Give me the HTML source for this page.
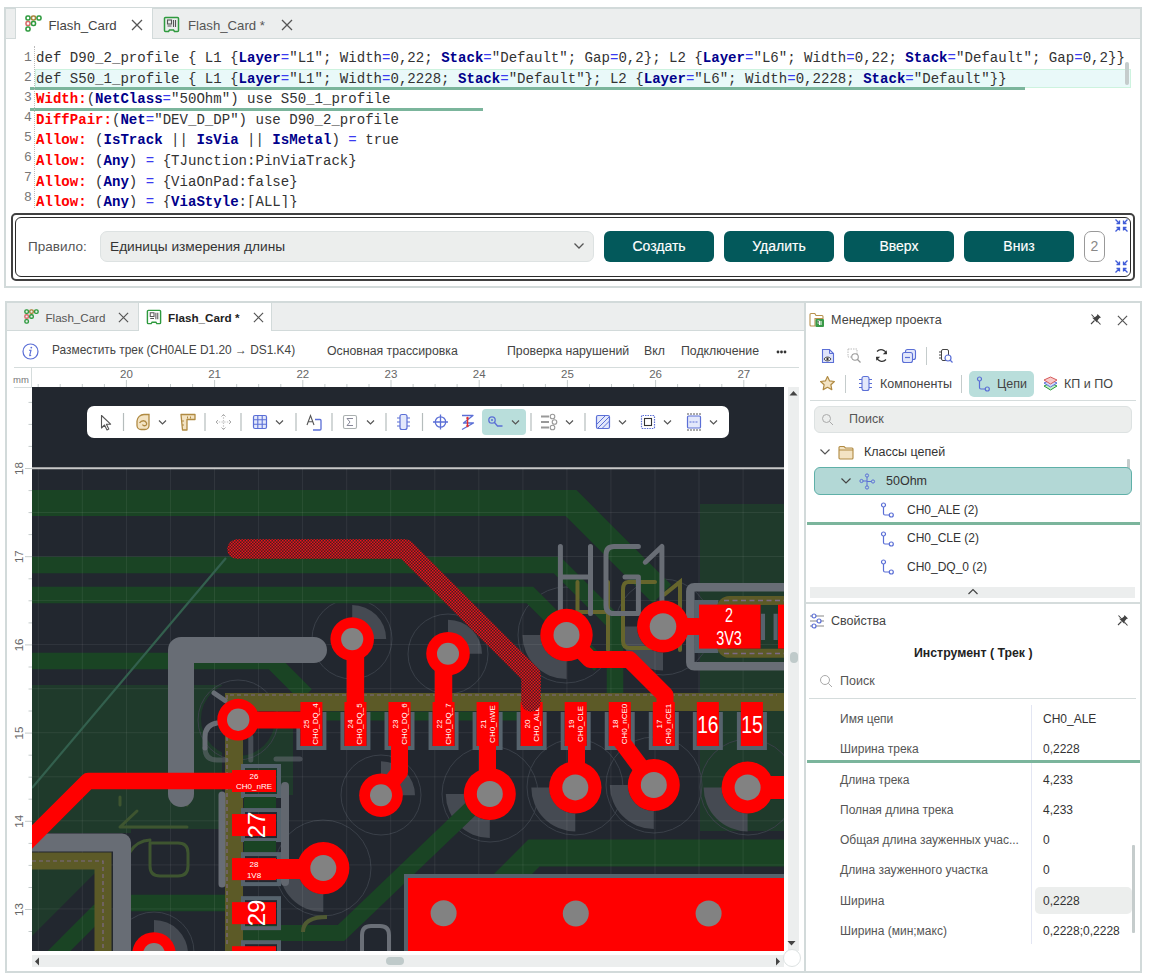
<!DOCTYPE html>
<html><head><meta charset="utf-8">
<style>
*{box-sizing:border-box;margin:0;padding:0}
html,body{width:1149px;height:977px;overflow:hidden;background:#fff;font-family:"Liberation Sans",sans-serif;color:#333}
.a{position:absolute}
.panel{position:absolute;border:2px solid #d2dada;background:#fff}
.tabbar{position:absolute;background:#eceeee;border-bottom:1px solid #d2dada}
.t{position:absolute;white-space:nowrap;line-height:1}
.code{position:absolute;left:36px;font-family:"Liberation Mono",monospace;font-size:14.07px;white-space:pre;color:#333;line-height:20px}
.ln{position:absolute;left:24px;font-family:"Liberation Mono",monospace;font-size:13px;color:#777;line-height:20px}
.k{color:#00008b;font-weight:bold}
.r{color:#f00;font-weight:bold}
.o{color:#3a3af0}
.btn{position:absolute;top:231px;width:110px;height:31px;background:#03595b;border-radius:6px;color:#fff;font-size:14px;-webkit-text-stroke:0.15px #fff;text-align:center;line-height:31px}
</style></head>
<body>
<!-- ============ TOP PANEL ============ -->
<div class="panel" style="left:4px;top:7px;width:1138px;height:281px"></div>
<div class="tabbar" style="left:6px;top:9px;width:1134px;height:30px"></div>
<div class="a" style="left:15px;top:8px;width:138px;height:31px;background:#fff;border-left:1px solid #d2dada;border-right:1px solid #d2dada"></div>
<svg class="a" style="left:25px;top:15px" width="17" height="17" viewBox="0 0 17 17"><g fill="none" stroke-width="1.6"><rect x="1" y="1" width="4" height="4" rx="1.5" stroke="#2e9a3e"/><rect x="6.5" y="1" width="4" height="4" rx="1.5" stroke="#a8823a"/><rect x="12" y="1" width="4" height="4" rx="1.5" stroke="#2e9a3e"/><rect x="1" y="6.5" width="4" height="4" rx="1.5" stroke="#d86a6a"/><rect x="6.5" y="6.5" width="4" height="4" rx="1.5" stroke="#2e9a3e"/><rect x="1" y="12" width="4" height="4" rx="1.5" stroke="#2e9a3e"/></g></svg>
<div class="t" style="left:48.5px;top:18.5px;font-size:13.2px;color:#444">Flash_Card</div>
<svg class="a" style="left:131px;top:19px" width="12" height="12" viewBox="0 0 12 12"><path d="M1 1L11 11M11 1L1 11" stroke="#555" stroke-width="1.3"/></svg>
<svg class="a" style="left:163px;top:16px" width="17" height="17" viewBox="0 0 17 17"><path d="M2.5 1.5h12a1 1 0 0 1 1 1v12a1 1 0 0 1-1 1h-3l-1-1.5h-4l-1 1.5h-3a1 1 0 0 1-1-1v-12a1 1 0 0 1 1-1z" fill="none" stroke="#2e9a3e" stroke-width="1.5"/><rect x="4.5" y="4" width="4" height="4" fill="none" stroke="#555" stroke-width="1.1"/><path d="M10.5 4v7M12.5 4v7M4.5 10h4" stroke="#555" stroke-width="1.1"/></svg>
<div class="t" style="left:188px;top:18.5px;font-size:13.2px;color:#555">Flash_Card *</div>
<svg class="a" style="left:281px;top:19px" width="12" height="12" viewBox="0 0 12 12"><path d="M1 1L11 11M11 1L1 11" stroke="#555" stroke-width="1.3"/></svg>


<!-- code -->
<div class="a" style="left:35px;top:69px;width:1096px;height:19px;background:#e9f9f9;border:1px solid #cdf3df"></div>
<div class="a" style="left:30px;top:87px;width:995px;height:3px;background:#7bb59c"></div>
<div class="a" style="left:30px;top:108px;width:453px;height:3px;background:#7bb59c"></div>
<div class="a" style="left:34px;top:46px;width:0;height:162px;border-left:1px dotted #bbb"></div>
<div class="a" style="left:1125px;top:62px;width:4px;height:23px;background:#c5cccc;border-radius:2px"></div>
<div class="a" style="left:0;top:44px;width:1140px;height:164px;overflow:hidden">
<div class="ln" style="top:4px">1<br>2<br>3<br>4<br>5<br>6<br>7<br>8</div>
</div>
<div class="a" style="left:0;top:44px;width:1140px;height:164px;overflow:hidden">
<div class="code" style="top:4px;line-height:20.6px">def D90_2_profile { L1 {<span class="k">Layer</span><span class="o">=</span>"L1"; Width<span class="o">=</span>0,22; <span class="k">Stack</span><span class="o">=</span>"Default"; Gap<span class="o">=</span>0,2}; L2 {<span class="k">Layer</span><span class="o">=</span>"L6"; Width<span class="o">=</span>0,22; <span class="k">Stack</span><span class="o">=</span>"Default"; Gap<span class="o">=</span>0,2}}
def S50_1_profile { L1 {<span class="k">Layer</span><span class="o">=</span>"L1"; Width<span class="o">=</span>0,2228; <span class="k">Stack</span><span class="o">=</span>"Default"}; L2 {<span class="k">Layer</span><span class="o">=</span>"L6"; Width<span class="o">=</span>0,2228; <span class="k">Stack</span><span class="o">=</span>"Default"}}
<span class="r">Width:</span>(<span class="k">NetClass</span><span class="o">=</span>"50Ohm") use S50_1_profile
<span class="r">DiffPair:</span>(<span class="k">Net</span><span class="o">=</span>"DEV_D_DP") use D90_2_profile
<span class="r">Allow:</span> (<span class="k">IsTrack</span> || <span class="k">IsVia</span> || <span class="k">IsMetal</span>) <span class="o">=</span> true
<span class="r">Allow:</span> (<span class="k">Any</span>) <span class="o">=</span> {TJunction:PinViaTrack}
<span class="r">Allow:</span> (<span class="k">Any</span>) <span class="o">=</span> {ViaOnPad:false}
<span class="r">Allow:</span> (<span class="k">Any</span>) <span class="o">=</span> {<span class="k">ViaStyle</span>:[ALL]}</div>
</div>

<!-- rule box -->
<div class="a" style="left:11px;top:213px;width:1124px;height:68px;border:2px solid #404040;border-radius:5px"></div>
<div class="a" style="left:15px;top:216.5px;width:1116px;height:60px;border:1.5px solid #2a2a2a;border-radius:6px"></div>
<div class="t" style="left:28px;top:240px;font-size:13.5px;color:#555">Правило:</div>
<div class="a" style="left:100px;top:231px;width:494px;height:31px;background:#eceeed;border:1px solid #dde2e2;border-radius:7px"></div>
<div class="t" style="left:110px;top:240px;font-size:13.7px;color:#333">Единицы измерения длины</div>
<svg class="a" style="left:573px;top:242px" width="12" height="8"><path d="M1.5 1.5l4.5 4.5 4.5-4.5" fill="none" stroke="#555" stroke-width="1.3"/></svg>
<div class="btn" style="left:604px">Создать</div>
<div class="btn" style="left:724px">Удалить</div>
<div class="btn" style="left:844px">Вверх</div>
<div class="btn" style="left:964px">Вниз</div>
<div class="a" style="left:1084px;top:231px;width:21px;height:31px;border:1px solid #999;border-radius:7px;color:#888;font-size:14px;text-align:center;line-height:29px">2</div>

<svg class="a" style="left:1114px;top:218px" width="15" height="15" viewBox="0 0 15 15"><g stroke="#3f5bd8" stroke-width="1.3" fill="none"><path d="M1.5 1.5l4 4M2.5 5.5h3v-3"/><path d="M13.5 1.5l-4 4M12.5 5.5h-3v-3"/><path d="M1.5 13.5l4-4M2.5 9.5h3v3"/><path d="M13.5 13.5l-4-4M12.5 9.5h-3v3"/></g></svg><svg class="a" style="left:1114px;top:259px" width="15" height="15" viewBox="0 0 15 15"><g stroke="#3f5bd8" stroke-width="1.3" fill="none"><path d="M1.5 1.5l4 4M2.5 5.5h3v-3"/><path d="M13.5 1.5l-4 4M12.5 5.5h-3v-3"/><path d="M1.5 13.5l4-4M2.5 9.5h3v3"/><path d="M13.5 13.5l-4-4M12.5 9.5h-3v3"/></g></svg>
<!-- ============ BOTTOM LEFT PANEL ============ -->
<div class="panel" style="left:5px;top:301px;width:801px;height:672px"></div>
<div class="tabbar" style="left:7px;top:303px;width:797px;height:28px"></div>
<div class="a" style="left:138px;top:303px;width:134px;height:28px;background:#fff;border-left:1px solid #d2dada;border-right:1px solid #d2dada"></div>
<!--PCB--><svg class="a" style="left:32px;top:387px" width="752" height="564" viewBox="32 387 752 564">
<defs><pattern id="hatch" width="3" height="3" patternUnits="userSpaceOnUse"><rect width="3" height="3" fill="#4a1c20"/><rect width="1.5" height="1.5" fill="#e8141a"/><rect x="1.5" y="1.5" width="1.5" height="1.5" fill="#e8141a"/></pattern></defs>
<rect x="32" y="387" width="752" height="564" fill="#22272f"/>
<path d="M32 685H222V829H131V833H32z" fill="#1f3a2b"/>
<rect x="700" y="504" width="84" height="327" fill="#1f3a2b"/>
<path d="M32 869H95V873L32 936z" fill="#1f3a2b"/>
<path d="M50 960L100 910" stroke="#1a4424" stroke-width="16"/>
<rect x="243" y="700" width="50" height="95" fill="#1f3a2b"/>
<circle cx="238" cy="719" r="37" fill="#22272f"/>
<circle cx="352" cy="639" r="40" fill="none" stroke="#3a4049" stroke-width="1"/>
<circle cx="448" cy="654" r="40" fill="none" stroke="#3a4049" stroke-width="1"/>
<circle cx="566" cy="635" r="48" fill="none" stroke="#3a4049" stroke-width="1"/>
<circle cx="663" cy="627" r="48" fill="none" stroke="#3a4049" stroke-width="1"/>
<circle cx="238" cy="720" r="40" fill="none" stroke="#3a4049" stroke-width="1"/>
<circle cx="381" cy="795" r="40" fill="none" stroke="#3a4049" stroke-width="1"/>
<circle cx="490" cy="794" r="48" fill="none" stroke="#3a4049" stroke-width="1"/>
<circle cx="575" cy="787" r="48" fill="none" stroke="#3a4049" stroke-width="1"/>
<circle cx="654" cy="785" r="48" fill="none" stroke="#3a4049" stroke-width="1"/>
<circle cx="748" cy="787" r="48" fill="none" stroke="#3a4049" stroke-width="1"/>
<circle cx="323" cy="868" r="48" fill="none" stroke="#3a4049" stroke-width="1"/>
<circle cx="154" cy="952" r="40" fill="none" stroke="#3a4049" stroke-width="1"/>
<path d="M522.5 635A44 44 0 0 0 566.5 679V661A26 26 0 0 1 540.5 635z" fill="#454a52"/>
<path d="M619 626.5A44 44 0 0 0 663 670.5V652.5A26 26 0 0 1 637 626.5z" fill="#454a52"/>
<path d="M445.8 794A44 44 0 0 0 489.8 838V820A26 26 0 0 1 463.8 794z" fill="#454a52"/>
<path d="M531.3 787.4A44 44 0 0 0 575.3 831.4V813.4A26 26 0 0 1 549.3 787.4z" fill="#454a52"/>
<path d="M609.8 785A44 44 0 0 0 653.8 829V811A26 26 0 0 1 627.8 785z" fill="#454a52"/>
<path d="M703.6 787.4A44 44 0 0 0 747.6 831.4V813.4A26 26 0 0 1 721.6 787.4z" fill="#454a52"/>
<path d="M279.3 868.1A44 44 0 0 0 323.3 912.1V894.1A26 26 0 0 1 297.3 868.1z" fill="#454a52"/>
<path d="M352.2 605.1A34 34 0 0 1 386.2 639.1H373.2A21 21 0 0 0 352.2 618.1z" fill="#454a52"/>
<path d="M448 619.7A34 34 0 0 1 482 653.7H469A21 21 0 0 0 448 632.7z" fill="#454a52"/>
<path d="M381 761.2A34 34 0 0 1 415 795.2H402A21 21 0 0 0 381 774.2z" fill="#454a52"/>
<path d="M154 920A34 34 0 0 1 188 954H175A21 21 0 0 0 154 933z" fill="#454a52"/>
<path d="M32 503H571L662 594" stroke="#1a4424" stroke-width="26" fill="none"/>
<path d="M32 565H557L615 623V700" stroke="#1a4424" stroke-width="16.5" fill="none"/>
<path d="M32 595H530L600 665" stroke="#1a4424" stroke-width="16.5" fill="none"/>
<path d="M32 661H272L306 695" stroke="#1a4424" stroke-width="16.5" fill="none"/>
<path d="M300 716H520" stroke="#1a4424" stroke-width="9" fill="none"/>
<path d="M131 903H225" stroke="#1a4424" stroke-width="16.5" fill="none"/>
<path d="M243 933H341L480 800" stroke="#1a4424" stroke-width="16" fill="none"/>
<path d="M784 853H534L470 917" stroke="#1a4424" stroke-width="27" fill="none"/>
<path d="M38.3 468V951 M82.3 468V951 M126.4 468V951 M170.4 468V951 M214.5 468V951 M258.6 468V951 M302.6 468V951 M346.7 468V951 M390.7 468V951 M434.8 468V951 M478.8 468V951 M522.9 468V951 M566.9 468V951 M610.9 468V951 M655.0 468V951 M699.0 468V951 M743.1 468V951 M32 512.5H784 M32 556.5H784 M32 600.6H784 M32 644.6H784 M32 688.7H784 M32 732.7H784 M32 776.8H784 M32 820.8H784 M32 864.9H784 M32 908.9H784" stroke="#ffffff" stroke-opacity="0.07" stroke-width="1" fill="none"/>
<path d="M234 951V702H784" stroke="#5c5a27" stroke-width="18" fill="none"/>
<path d="M234 951V702H784" stroke="#7d6a86" stroke-width="1.2" stroke-dasharray="4 3" fill="none" transform="translate(-7 -7)"/>
<path d="M32 861H103V951" stroke="#5c5a27" stroke-width="17" fill="none"/>
<path d="M32 861H103V951" stroke="#7d6a86" stroke-width="1.2" stroke-dasharray="4 3" fill="none"/>
<rect x="694.3" y="600" width="24" height="53" fill="#56636d"/>
<rect x="721.3" y="600.4" width="80" height="52.9" rx="8" stroke="#5c5a27" stroke-width="9" fill="none"/>
<path d="M724 600.5H784M724 653.5H784" stroke="#7d6a86" stroke-width="1.3" stroke-dasharray="5 3.5" fill="none"/>
<path d="M763 613.8V640M775.6 613.8V640" stroke="#56636d" stroke-width="4.1"/>
<path d="M577.5 582V612H608M608 582V650M655 582H628Q623 582 623 590V641Q623 648 630 648H655V620M664.5 594.4L680 582V650" stroke="#66652c" stroke-width="4" fill="none" stroke-linecap="round"/>
<path d="M120 797V805M187 797V805M120 827H187M120 827L137 811M150 840A25 25 0 0 0 130 852M150 843H178Q188 843 188 853V866Q188 876 178 876H160Q150 876 150 866V843" stroke="#3e5530" stroke-width="3" fill="none" stroke-linecap="round"/>
<path d="M181 794V650H314" stroke="#686d75" stroke-width="26" fill="none" stroke-linecap="round" stroke-linejoin="round"/>
<path d="M32 842.5H122V951" stroke="#686d75" stroke-width="18" fill="none" stroke-linejoin="round"/>
<path d="M222 795V884" stroke="#686d75" stroke-width="7" fill="none" stroke-linecap="round"/>
<path d="M285 786V882" stroke="#62676f" stroke-width="8" fill="none" stroke-linecap="round"/>
<path d="M784 587.3H694.3Q690.3 587.3 690.3 591.3V662.3Q690.3 666.3 694.3 666.3H784" stroke="#686d75" stroke-width="8.5" fill="none"/>
<path d="M560.4 546.5V613.6M590.5 546.5V613.6M560.4 577H590.5M638.4 546.5H614Q606 546.5 606 555V605Q606 613.6 614 613.6H638.4V577H625M645.3 562.2L661.9 546.5V613.6" stroke="#686d75" stroke-width="5" fill="none" stroke-linecap="round" stroke-linejoin="round"/>
<path d="M362 951V935Q362 926 371 926H380Q389 926 389 935V951" stroke="#6a6f77" stroke-width="4" fill="none"/>
<path d="M327 917Q303 917 303 932" stroke="#4f5a32" stroke-width="4" fill="none"/>
<path d="M214 693L225 700.5M217 723Q205 725 205 737V748" stroke="#686d75" stroke-width="5" fill="none" stroke-linecap="round"/>
<path d="M205 748Q205 760 217 760H226M250.8 737V760M276 759H300" stroke="#686d75" stroke-width="5" fill="none" stroke-linecap="round" opacity="0.55"/>
<path d="M298.4 712V748H324.4V712" stroke="#56636d" stroke-width="4" fill="none"/>
<path d="M342.45 712V748H368.45V712" stroke="#56636d" stroke-width="4" fill="none"/>
<path d="M386.5 712V748H412.5V712" stroke="#56636d" stroke-width="4" fill="none"/>
<path d="M430.54999999999995 712V748H456.54999999999995V712" stroke="#56636d" stroke-width="4" fill="none"/>
<path d="M474.59999999999997 712V748H500.59999999999997V712" stroke="#56636d" stroke-width="4" fill="none"/>
<path d="M518.65 712V748H544.65V712" stroke="#56636d" stroke-width="4" fill="none"/>
<path d="M562.6999999999999 712V748H588.6999999999999V712" stroke="#56636d" stroke-width="4" fill="none"/>
<path d="M606.75 712V748H632.75V712" stroke="#56636d" stroke-width="4" fill="none"/>
<path d="M650.8 712V748H676.8V712" stroke="#56636d" stroke-width="4" fill="none"/>
<path d="M694.8499999999999 712V748H720.8499999999999V712" stroke="#56636d" stroke-width="4" fill="none"/>
<path d="M738.9 712V748H764.9V712" stroke="#56636d" stroke-width="4" fill="none"/>
<rect x="243" y="766.0" width="36" height="30" fill="none" stroke="#56636d" stroke-width="4"/>
<rect x="243" y="810.05" width="36" height="30" fill="none" stroke="#56636d" stroke-width="4"/>
<rect x="243" y="854.1" width="36" height="30" fill="none" stroke="#56636d" stroke-width="4"/>
<rect x="243" y="898.15" width="36" height="30" fill="none" stroke="#56636d" stroke-width="4"/>
<rect x="243" y="942.2" width="36" height="30" fill="none" stroke="#56636d" stroke-width="4"/>
<rect x="244" y="797.0" width="32" height="11" fill="#1a4424"/>
<rect x="244" y="841.0" width="32" height="11" fill="#1a4424"/>
<rect x="406" y="876" width="400" height="100" fill="none" stroke="#56636d" stroke-width="4"/>
<path d="M238 720H311" stroke="#ff0000" stroke-width="17" fill="none" stroke-linejoin="round"/>
<path d="M355.4 645V723" stroke="#ff0000" stroke-width="17.5" fill="none" stroke-linejoin="round"/>
<path d="M443.5 660V723" stroke="#ff0000" stroke-width="17.5" fill="none" stroke-linejoin="round"/>
<path d="M399.5 723V772L381 795" stroke="#ff0000" stroke-width="17" fill="none" stroke-linejoin="round"/>
<path d="M487.5 723V794" stroke="#ff0000" stroke-width="17" fill="none" stroke-linejoin="round"/>
<path d="M566.5 635L590 659.4H629.4L665 695V723" stroke="#ff0000" stroke-width="17" fill="none" stroke-linejoin="round"/>
<path d="M663 626.5H700" stroke="#ff0000" stroke-width="17" fill="none" stroke-linejoin="round"/>
<path d="M576.5 723V787" stroke="#ff0000" stroke-width="17" fill="none" stroke-linejoin="round"/>
<path d="M620.4 740L654 785" stroke="#ff0000" stroke-width="17" fill="none" stroke-linejoin="round"/>
<path d="M748 787.5H784" stroke="#ff0000" stroke-width="23" fill="none" stroke-linejoin="round"/>
<path d="M26 843L88 781H260" stroke="#ff0000" stroke-width="16.5" fill="none" stroke-linejoin="round"/>
<path d="M254 869H323" stroke="#ff0000" stroke-width="20" fill="none" stroke-linejoin="round"/>
<path d="M154 960H260" stroke="#ff0000" stroke-width="12" fill="none" stroke-linejoin="round"/>
<rect x="300.4" y="702" width="22" height="44" fill="#ff0000"/>
<rect x="344.45" y="702" width="22" height="44" fill="#ff0000"/>
<rect x="388.5" y="702" width="22" height="44" fill="#ff0000"/>
<rect x="432.54999999999995" y="702" width="22" height="44" fill="#ff0000"/>
<rect x="476.59999999999997" y="702" width="22" height="44" fill="#ff0000"/>
<rect x="520.65" y="702" width="22" height="44" fill="#ff0000"/>
<rect x="564.6999999999999" y="702" width="22" height="44" fill="#ff0000"/>
<rect x="608.75" y="702" width="22" height="44" fill="#ff0000"/>
<rect x="652.8" y="702" width="22" height="44" fill="#ff0000"/>
<rect x="696.8499999999999" y="702" width="22" height="44" fill="#ff0000"/>
<rect x="740.9" y="702" width="22" height="44" fill="#ff0000"/>
<rect x="232" y="770.0" width="44" height="22" fill="#ff0000"/>
<rect x="232" y="814.05" width="44" height="22" fill="#ff0000"/>
<rect x="232" y="858.1" width="44" height="22" fill="#ff0000"/>
<rect x="232" y="902.15" width="44" height="22" fill="#ff0000"/>
<rect x="232" y="946.2" width="44" height="22" fill="#ff0000"/>
<rect x="232" y="990.25" width="44" height="22" fill="#ff0000"/>
<rect x="699" y="604.6" width="61.5" height="44" fill="#ff0000"/>
<rect x="778" y="604.6" width="10" height="44" fill="#ff0000"/>
<rect x="408" y="878" width="380" height="80" fill="#ff0000"/>
<circle cx="238.2" cy="719.7" r="20.9" fill="#ff0000"/>
<circle cx="352.2" cy="639.1" r="21.8" fill="#ff0000"/>
<circle cx="448" cy="653.7" r="21.8" fill="#ff0000"/>
<circle cx="381" cy="795.2" r="21.8" fill="#ff0000"/>
<circle cx="489.8" cy="794" r="26" fill="#ff0000"/>
<circle cx="566.5" cy="635" r="26.2" fill="#ff0000"/>
<circle cx="663" cy="626.5" r="26" fill="#ff0000"/>
<circle cx="575.3" cy="787.4" r="26.2" fill="#ff0000"/>
<circle cx="653.8" cy="785" r="26" fill="#ff0000"/>
<circle cx="747.6" cy="787.4" r="26" fill="#ff0000"/>
<circle cx="323.3" cy="868.1" r="26.1" fill="#ff0000"/>
<circle cx="154" cy="954" r="21.8" fill="#ff0000"/>
<circle cx="238.2" cy="719.7" r="11.2" fill="#828282"/>
<circle cx="352.2" cy="639.1" r="11.1" fill="#828282"/>
<circle cx="448" cy="653.7" r="11" fill="#828282"/>
<circle cx="381" cy="795.2" r="11" fill="#828282"/>
<circle cx="489.8" cy="794" r="13" fill="#828282"/>
<circle cx="566.5" cy="635" r="13" fill="#828282"/>
<circle cx="663" cy="626.5" r="13.3" fill="#828282"/>
<circle cx="575.3" cy="787.4" r="13" fill="#828282"/>
<circle cx="653.8" cy="785" r="13" fill="#828282"/>
<circle cx="747.6" cy="787.4" r="13" fill="#828282"/>
<circle cx="323.3" cy="868.1" r="13" fill="#828282"/>
<circle cx="154" cy="954" r="11" fill="#828282"/>
<circle cx="443.6" cy="913.2" r="13" fill="#828282"/>
<circle cx="575.8" cy="913.5" r="13" fill="#828282"/>
<circle cx="708.6" cy="913.5" r="13" fill="#828282"/>
<text transform="translate(311.4 724) rotate(-90)" text-anchor="middle" font-family="Liberation Sans Narrow,Liberation Sans" font-size="8" fill="#fff" ><tspan x="0" dy="-2">25</tspan><tspan x="0" dy="9">CH0_DQ_4</tspan></text>
<text transform="translate(355.45 724) rotate(-90)" text-anchor="middle" font-family="Liberation Sans Narrow,Liberation Sans" font-size="8" fill="#fff" ><tspan x="0" dy="-2">24</tspan><tspan x="0" dy="9">CH0_DQ_5</tspan></text>
<text transform="translate(399.5 724) rotate(-90)" text-anchor="middle" font-family="Liberation Sans Narrow,Liberation Sans" font-size="8" fill="#fff" ><tspan x="0" dy="-2">23</tspan><tspan x="0" dy="9">CH0_DQ_6</tspan></text>
<text transform="translate(443.54999999999995 724) rotate(-90)" text-anchor="middle" font-family="Liberation Sans Narrow,Liberation Sans" font-size="8" fill="#fff" ><tspan x="0" dy="-2">22</tspan><tspan x="0" dy="9">CH0_DQ_7</tspan></text>
<text transform="translate(487.59999999999997 724) rotate(-90)" text-anchor="middle" font-family="Liberation Sans Narrow,Liberation Sans" font-size="8" fill="#fff" ><tspan x="0" dy="-2">21</tspan><tspan x="0" dy="9">CH0_nWE</tspan></text>
<text transform="translate(531.65 724) rotate(-90)" text-anchor="middle" font-family="Liberation Sans Narrow,Liberation Sans" font-size="8" fill="#fff" ><tspan x="0" dy="-2">20</tspan><tspan x="0" dy="9">CH0_ALE</tspan></text>
<text transform="translate(575.6999999999999 724) rotate(-90)" text-anchor="middle" font-family="Liberation Sans Narrow,Liberation Sans" font-size="8" fill="#fff" ><tspan x="0" dy="-2">19</tspan><tspan x="0" dy="9">CH0_CLE</tspan></text>
<text transform="translate(619.75 724) rotate(-90)" text-anchor="middle" font-family="Liberation Sans Narrow,Liberation Sans" font-size="8" fill="#fff" ><tspan x="0" dy="-2">18</tspan><tspan x="0" dy="9">CH0_nCE0</tspan></text>
<text transform="translate(663.8 724) rotate(-90)" text-anchor="middle" font-family="Liberation Sans Narrow,Liberation Sans" font-size="8" fill="#fff" ><tspan x="0" dy="-2">17</tspan><tspan x="0" dy="9">CH0_nCE1</tspan></text>
<text x="707.8499999999999" y="733" text-anchor="middle" font-family="Liberation Sans" font-size="24" fill="#fff" transform="translate(707.8499999999999 0) scale(0.8 1) translate(-707.8499999999999 0)">16</text>
<text x="751.9" y="733" text-anchor="middle" font-family="Liberation Sans" font-size="24" fill="#fff" transform="translate(751.9 0) scale(0.8 1) translate(-751.9 0)">15</text>
<text x="254" y="779" text-anchor="middle" font-family="Liberation Sans" font-size="8" fill="#fff">26</text><text x="254" y="789" text-anchor="middle" font-family="Liberation Sans" font-size="8" fill="#fff" textLength="36">CH0_nRE</text>
<text x="254" y="867" text-anchor="middle" font-family="Liberation Sans" font-size="8" fill="#fff">28</text><text x="254" y="878" text-anchor="middle" font-family="Liberation Sans" font-size="8" fill="#fff">1V8</text>
<text transform="translate(265 825) rotate(-90)" text-anchor="middle" font-family="Liberation Sans" font-size="24" fill="#fff">27</text>
<text transform="translate(265 913) rotate(-90)" text-anchor="middle" font-family="Liberation Sans" font-size="24" fill="#fff">29</text>
<g transform="translate(729 0) scale(0.72 1)"><text x="0" y="622.5" text-anchor="middle" font-family="Liberation Sans" font-size="20" fill="#fff">2</text><text x="0" y="645" text-anchor="middle" font-family="Liberation Sans" font-size="20" fill="#fff">3V3</text></g>
<path d="M237 549H405L531 675V702" stroke="url(#hatch)" stroke-width="19.5" fill="none" stroke-linecap="round" stroke-linejoin="round"/>
<path d="M226 558L32 788" stroke="#33604e" stroke-width="2.2" fill="none"/>
<path d="M32 468.3H784" stroke="#c8c8c8" stroke-width="2"/>
</svg><!--/PCB--><!--TB--><div class="a" style="left:87px;top:406px;width:642px;height:32px;background:#fff;border-radius:7px"></div>
<svg class="a" style="left:0;top:0" width="1149" height="977" viewBox="0 0 1149 977">
<rect x="482" y="409" width="44" height="26" rx="4" fill="#b9dedb"/>
<path d="M123.5 413V431" stroke="#b5bcbc" stroke-width="1.2"/>
<path d="M205 413V431" stroke="#b5bcbc" stroke-width="1.2"/>
<path d="M241 413V431" stroke="#b5bcbc" stroke-width="1.2"/>
<path d="M296 413V431" stroke="#b5bcbc" stroke-width="1.2"/>
<path d="M332 413V431" stroke="#b5bcbc" stroke-width="1.2"/>
<path d="M386 413V431" stroke="#b5bcbc" stroke-width="1.2"/>
<path d="M422.5 413V431" stroke="#b5bcbc" stroke-width="1.2"/>
<path d="M531 413V431" stroke="#b5bcbc" stroke-width="1.2"/>
<path d="M585 413V431" stroke="#b5bcbc" stroke-width="1.2"/>
<path d="M159 420.5l3.5 3.5 3.5-3.5" stroke="#555" stroke-width="1.2" fill="none"/>
<path d="M276 420.5l3.5 3.5 3.5-3.5" stroke="#555" stroke-width="1.2" fill="none"/>
<path d="M367 420.5l3.5 3.5 3.5-3.5" stroke="#555" stroke-width="1.2" fill="none"/>
<path d="M512 420.5l3.5 3.5 3.5-3.5" stroke="#555" stroke-width="1.2" fill="none"/>
<path d="M566 420.5l3.5 3.5 3.5-3.5" stroke="#555" stroke-width="1.2" fill="none"/>
<path d="M619 420.5l3.5 3.5 3.5-3.5" stroke="#555" stroke-width="1.2" fill="none"/>
<path d="M664 420.5l3.5 3.5 3.5-3.5" stroke="#555" stroke-width="1.2" fill="none"/>
<path d="M710 420.5l3.5 3.5 3.5-3.5" stroke="#555" stroke-width="1.2" fill="none"/>
<path d="M101.5 415.5V428l3-3 2.5 5 1.8-.9-2.4-4.9h4.2z" fill="#fff" stroke="#555" stroke-width="1.1" stroke-linejoin="round"/>
<path d="M137 421a7 7 0 0 1 7-6.5h5v11a4 4 0 0 1-4 4h-4a4 4 0 0 1-4-4z" fill="#f3e3c3" stroke="#b08a42" stroke-width="1.3"/><path d="M139.5 423c2-3 6-3 7 0s-3 3.5-4 1.5" stroke="#b08a42" stroke-width="1.3" fill="none"/>
<path d="M181 414.5h14v5h-8v10.5h-4.5z" fill="#f3e3c3" stroke="#b08a42" stroke-width="1.3" stroke-linejoin="round"/><path d="M183 420v2M183 424v2M187.5 416.5v2M190.5 416.5v2" stroke="#b08a42" stroke-width="1"/>
<path d="M223.5 414.5v15M216 422h15" stroke="#c5c5c5" stroke-width="1.2" stroke-dasharray="1.5 1.2"/><path d="M221.5 416.5l2-2 2 2M221.5 427.5l2 2 2-2M218 420l-2 2 2 2M229 420l2 2-2 2" stroke="#aaa" stroke-width="1" fill="none"/>
<rect x="253.5" y="415.5" width="13" height="13" rx="1.5" fill="#e3e8fb" stroke="#5b6fd6" stroke-width="1.2"/><path d="M257.8 415.5v13M262.2 415.5v13M253.5 419.8h13M253.5 424.2h13" stroke="#5b6fd6" stroke-width="1.1"/>
<path d="M307 425l3.5-9.5 3.5 9.5M308.3 421.7h4.4" stroke="#555" stroke-width="1.1" fill="none"/><path d="M315 419.5h5a1 1 0 0 1 1 1V429a1 1 0 0 1-1 1h-7" stroke="#5b6fd6" stroke-width="1.3" fill="none"/>
<rect x="343.5" y="415.5" width="13" height="13" rx="1.5" fill="none" stroke="#aab0b0" stroke-width="1.1"/><path d="M353 418.5h-6l3 3.5-3 3.5h6" stroke="#889" stroke-width="1" fill="none"/>
<rect x="400" y="414.5" width="7" height="15" rx="2" fill="#e3e8fb" stroke="#5b6fd6" stroke-width="1.2"/><path d="M397 418h3M397 422h3M397 426h3M407 418h3M407 422h3M407 426h3" stroke="#5b6fd6" stroke-width="1.2"/>
<circle cx="440.5" cy="422" r="5.2" fill="none" stroke="#5b6fd6" stroke-width="1.3"/><path d="M440.5 414.5v15M433 422h15" stroke="#5b6fd6" stroke-width="1.3"/>
<path d="M462 415.5h11l-9.5 7.5h10l-11.5 6.5" stroke="#5b6fd6" stroke-width="1.3" fill="none" stroke-linejoin="round"/><path d="M467.5 418v8" stroke="#e03030" stroke-width="1.5"/><circle cx="467.5" cy="418" r="1.2" fill="#e03030"/><circle cx="467.5" cy="426" r="1.2" fill="#e03030"/>
<circle cx="492" cy="420" r="3.2" fill="none" stroke="#5b6fd6" stroke-width="1.3"/><circle cx="492" cy="420" r="1" fill="#5b6fd6"/><path d="M494.5 422.5l3 3.5h5" stroke="#5b6fd6" stroke-width="1.3" fill="none"/>
<path d="M541 416.5h8M541 422h8M541 427.5h8" stroke="#999" stroke-width="2"/><circle cx="552.5" cy="416.5" r="2.3" fill="#fff" stroke="#999" stroke-width="1.1"/><circle cx="554.5" cy="422" r="2.3" fill="#fff" stroke="#999" stroke-width="1.1"/><circle cx="552.5" cy="427.5" r="2.3" fill="#fff" stroke="#999" stroke-width="1.1"/>
<rect x="596.5" y="415.5" width="13" height="13" rx="1.5" fill="#e3e8fb" stroke="#5b6fd6" stroke-width="1.2"/><path d="M597 424l8-8M598 428l11-11M602 428.5l7.5-7.5" stroke="#5b6fd6" stroke-width="1"/>
<rect x="641.5" y="415.5" width="13" height="13" rx="1" fill="none" stroke="#5b6fd6" stroke-width="1.2" stroke-dasharray="1.5 1"/><rect x="644.5" y="418.5" width="7" height="7" fill="none" stroke="#333" stroke-width="1.1"/>
<rect x="687.5" y="416" width="13" height="12" rx="1" fill="#e3e8fb" stroke="#5b6fd6" stroke-width="1.2"/><path d="M687 414h14M687 430h14" stroke="#555" stroke-width="1" stroke-dasharray="2 1"/><path d="M689.5 422h9" stroke="#5b6fd6" stroke-width="1" stroke-dasharray="2 1"/>
</svg><!--/TB-->
<svg class="a" style="left:24px;top:309px" width="15" height="15" viewBox="0 0 17 17"><g fill="none" stroke-width="1.6"><rect x="1" y="1" width="4" height="4" rx="1.5" stroke="#2e9a3e"/><rect x="6.5" y="1" width="4" height="4" rx="1.5" stroke="#a8823a"/><rect x="12" y="1" width="4" height="4" rx="1.5" stroke="#2e9a3e"/><rect x="1" y="6.5" width="4" height="4" rx="1.5" stroke="#d86a6a"/><rect x="6.5" y="6.5" width="4" height="4" rx="1.5" stroke="#2e9a3e"/><rect x="1" y="12" width="4" height="4" rx="1.5" stroke="#2e9a3e"/></g></svg>
<div class="t" style="left:45.5px;top:311.5px;font-size:11.6px;color:#555">Flash_Card</div>
<svg class="a" style="left:118px;top:312px" width="11" height="11" viewBox="0 0 12 12"><path d="M1 1L11 11M11 1L1 11" stroke="#555" stroke-width="1.3"/></svg>
<svg class="a" style="left:146px;top:309px" width="16" height="16" viewBox="0 0 17 17"><path d="M2.5 1.5h12a1 1 0 0 1 1 1v12a1 1 0 0 1-1 1h-3l-1-1.5h-4l-1 1.5h-3a1 1 0 0 1-1-1v-12a1 1 0 0 1 1-1z" fill="none" stroke="#2e9a3e" stroke-width="1.5"/><rect x="4.5" y="4" width="4" height="4" fill="none" stroke="#555" stroke-width="1.1"/><path d="M10.5 4v7M12.5 4v7M4.5 10h4" stroke="#555" stroke-width="1.1"/></svg>
<div class="t" style="left:168px;top:311.5px;font-size:11.7px;color:#222;font-weight:bold">Flash_Card *</div>
<svg class="a" style="left:253px;top:312px" width="11" height="11" viewBox="0 0 12 12"><path d="M1 1L11 11M11 1L1 11" stroke="#555" stroke-width="1.3"/></svg>

<svg class="a" style="left:22px;top:343px" width="17" height="17" viewBox="0 0 17 17"><circle cx="8.5" cy="8.5" r="7.5" fill="none" stroke="#5b6fd6" stroke-width="1.2"/><circle cx="9.3" cy="4.6" r="0.9" fill="#5b6fd6"/><path d="M7 7.2h2l-1.3 5.2c-.1.5.4.6 1.4-.3" fill="none" stroke="#5b6fd6" stroke-width="1.1"/></svg>
<div class="t" style="left:52px;top:345px;font-size:11.9px;color:#444">Разместить трек (CH0ALE D1.20 → DS1.K4)</div>
<div class="t" style="left:327px;top:345px;font-size:12.3px;color:#444">Основная трассировка</div>
<div class="t" style="left:507px;top:345px;font-size:12.3px;color:#444">Проверка нарушений</div>
<div class="t" style="left:644px;top:345px;font-size:12.3px;color:#444">Вкл</div>
<div class="t" style="left:681px;top:345px;font-size:12.3px;color:#444">Подключение</div>
<svg class="a" style="left:776px;top:349px" width="12" height="6"><circle cx="2" cy="3" r="1.4" fill="#333"/><circle cx="5.5" cy="3" r="1.4" fill="#333"/><circle cx="9" cy="3" r="1.4" fill="#333"/></svg>
<div class="a" style="left:14px;top:367px;width:785px;height:1px;background:#d5dcdc"></div>
<div class="a" style="left:14px;top:387px;width:18px;height:1px;background:#d5dcdc"></div>
<div class="a" style="left:31px;top:367px;width:1px;height:20px;background:#d5dcdc"></div>
<div class="t" style="left:13px;top:374.5px;font-size:9.5px;color:#777">mm</div>
<svg class="a" style="left:0;top:0" width="1149" height="977" viewBox="0 0 1149 977" font-family="Liberation Sans"><path d="M38.2 384V387" stroke="#c5cccc" stroke-width="1"/><path d="M60.2 384V387" stroke="#c5cccc" stroke-width="1"/><path d="M82.3 384V387" stroke="#c5cccc" stroke-width="1"/><path d="M104.4 384V387" stroke="#c5cccc" stroke-width="1"/><path d="M126.4 380V387" stroke="#c5cccc" stroke-width="1"/><text x="126.4" y="377.5" text-anchor="middle" font-size="11.5" fill="#666">20</text><path d="M148.5 384V387" stroke="#c5cccc" stroke-width="1"/><path d="M170.5 384V387" stroke="#c5cccc" stroke-width="1"/><path d="M192.6 384V387" stroke="#c5cccc" stroke-width="1"/><path d="M214.6 380V387" stroke="#c5cccc" stroke-width="1"/><text x="214.6" y="377.5" text-anchor="middle" font-size="11.5" fill="#666">21</text><path d="M236.7 384V387" stroke="#c5cccc" stroke-width="1"/><path d="M258.7 384V387" stroke="#c5cccc" stroke-width="1"/><path d="M280.8 384V387" stroke="#c5cccc" stroke-width="1"/><path d="M302.8 380V387" stroke="#c5cccc" stroke-width="1"/><text x="302.8" y="377.5" text-anchor="middle" font-size="11.5" fill="#666">22</text><path d="M324.9 384V387" stroke="#c5cccc" stroke-width="1"/><path d="M346.9 384V387" stroke="#c5cccc" stroke-width="1"/><path d="M369.0 384V387" stroke="#c5cccc" stroke-width="1"/><path d="M391.0 380V387" stroke="#c5cccc" stroke-width="1"/><text x="391.0" y="377.5" text-anchor="middle" font-size="11.5" fill="#666">23</text><path d="M413.1 384V387" stroke="#c5cccc" stroke-width="1"/><path d="M435.1 384V387" stroke="#c5cccc" stroke-width="1"/><path d="M457.1 384V387" stroke="#c5cccc" stroke-width="1"/><path d="M479.2 380V387" stroke="#c5cccc" stroke-width="1"/><text x="479.2" y="377.5" text-anchor="middle" font-size="11.5" fill="#666">24</text><path d="M501.2 384V387" stroke="#c5cccc" stroke-width="1"/><path d="M523.3 384V387" stroke="#c5cccc" stroke-width="1"/><path d="M545.4 384V387" stroke="#c5cccc" stroke-width="1"/><path d="M567.4 380V387" stroke="#c5cccc" stroke-width="1"/><text x="567.4" y="377.5" text-anchor="middle" font-size="11.5" fill="#666">25</text><path d="M589.5 384V387" stroke="#c5cccc" stroke-width="1"/><path d="M611.5 384V387" stroke="#c5cccc" stroke-width="1"/><path d="M633.6 384V387" stroke="#c5cccc" stroke-width="1"/><path d="M655.6 380V387" stroke="#c5cccc" stroke-width="1"/><text x="655.6" y="377.5" text-anchor="middle" font-size="11.5" fill="#666">26</text><path d="M677.6 384V387" stroke="#c5cccc" stroke-width="1"/><path d="M699.7 384V387" stroke="#c5cccc" stroke-width="1"/><path d="M721.8 384V387" stroke="#c5cccc" stroke-width="1"/><path d="M743.8 380V387" stroke="#c5cccc" stroke-width="1"/><text x="743.8" y="377.5" text-anchor="middle" font-size="11.5" fill="#666">27</text><path d="M765.9 384V387" stroke="#c5cccc" stroke-width="1"/><path d="M28.5 402.4H32" stroke="#c5cccc" stroke-width="1"/><path d="M28.5 424.4H32" stroke="#c5cccc" stroke-width="1"/><path d="M28.5 446.4H32" stroke="#c5cccc" stroke-width="1"/><path d="M25 468.5H32" stroke="#c5cccc" stroke-width="1"/><text transform="translate(22.5 468.5) rotate(-90)" text-anchor="middle" font-size="11.5" fill="#666">18</text><path d="M28.5 490.6H32" stroke="#c5cccc" stroke-width="1"/><path d="M28.5 512.6H32" stroke="#c5cccc" stroke-width="1"/><path d="M28.5 534.6H32" stroke="#c5cccc" stroke-width="1"/><path d="M25 556.7H32" stroke="#c5cccc" stroke-width="1"/><text transform="translate(22.5 556.7) rotate(-90)" text-anchor="middle" font-size="11.5" fill="#666">17</text><path d="M28.5 578.8H32" stroke="#c5cccc" stroke-width="1"/><path d="M28.5 600.8H32" stroke="#c5cccc" stroke-width="1"/><path d="M28.5 622.9H32" stroke="#c5cccc" stroke-width="1"/><path d="M25 644.9H32" stroke="#c5cccc" stroke-width="1"/><text transform="translate(22.5 644.9) rotate(-90)" text-anchor="middle" font-size="11.5" fill="#666">16</text><path d="M28.5 667.0H32" stroke="#c5cccc" stroke-width="1"/><path d="M28.5 689.0H32" stroke="#c5cccc" stroke-width="1"/><path d="M28.5 711.0H32" stroke="#c5cccc" stroke-width="1"/><path d="M25 733.1H32" stroke="#c5cccc" stroke-width="1"/><text transform="translate(22.5 733.1) rotate(-90)" text-anchor="middle" font-size="11.5" fill="#666">15</text><path d="M28.5 755.2H32" stroke="#c5cccc" stroke-width="1"/><path d="M28.5 777.2H32" stroke="#c5cccc" stroke-width="1"/><path d="M28.5 799.2H32" stroke="#c5cccc" stroke-width="1"/><path d="M25 821.3H32" stroke="#c5cccc" stroke-width="1"/><text transform="translate(22.5 821.3) rotate(-90)" text-anchor="middle" font-size="11.5" fill="#666">14</text><path d="M28.5 843.4H32" stroke="#c5cccc" stroke-width="1"/><path d="M28.5 865.4H32" stroke="#c5cccc" stroke-width="1"/><path d="M28.5 887.5H32" stroke="#c5cccc" stroke-width="1"/><path d="M25 909.5H32" stroke="#c5cccc" stroke-width="1"/><text transform="translate(22.5 909.5) rotate(-90)" text-anchor="middle" font-size="11.5" fill="#666">13</text><path d="M28.5 931.5H32" stroke="#c5cccc" stroke-width="1"/></svg>
<!-- scrollbars -->
<div class="a" style="left:788px;top:387px;width:11px;height:564px;background:#eceeee"></div>
<svg class="a" style="left:788px;top:389px" width="11" height="8"><path d="M1.5 6.5L5.5 2L9.5 6.5z" fill="#444"/></svg>
<svg class="a" style="left:786px;top:939px" width="11" height="8"><path d="M1.5 2L5.5 6.5L9.5 2z" fill="#444"/></svg>
<div class="a" style="left:790px;top:652px;width:8px;height:11px;background:#bfcaca;border-radius:4px"></div>
<div class="a" style="left:32px;top:955px;width:752px;height:12px;background:#eceeee"></div>
<svg class="a" style="left:33px;top:956px" width="8" height="11"><path d="M6 1.5L2 5.5L6 9.5z" fill="#444"/></svg>
<svg class="a" style="left:774px;top:956px" width="8" height="11"><path d="M2 1.5L6 5.5L2 9.5z" fill="#444"/></svg>
<div class="a" style="left:386px;top:957px;width:18px;height:8px;background:#bfcaca;border-radius:4px"></div>
<div class="a" style="left:783px;top:949px;width:18px;height:18px;background:#fff;border:1px solid #dde2e2;border-radius:9px"></div>


<!-- ============ BOTTOM RIGHT PANEL ============ -->
<div class="panel" style="left:804px;top:301px;width:338px;height:672px"></div>


<!-- right panel content -->
<svg class="a" style="left:809px;top:312px" width="16" height="16" viewBox="0 0 16 16"><path d="M1 3.5V13a1 1 0 0 0 1 1h4V6.5h8V4.5a1 1 0 0 0-1-1H7L5.8 1.5H2a1 1 0 0 0-1 1z" fill="none" stroke="#b8924e" stroke-width="1.1"/><rect x="6.5" y="7" width="8.5" height="8" rx="1" fill="#3a9a48"/><path d="M8.5 9h2v4M12 9v4M8.5 11h1.5" stroke="#fff" stroke-width="1"/></svg>
<div class="t" style="left:831px;top:314px;font-size:12.6px;color:#444">Менеджер проекта</div>
<svg class="a" style="left:1090px;top:313px" width="12" height="13" viewBox="0 0 12 13"><path d="M7.5 1L11 4.5 9.5 5 7 8 7.5 10 2 4.5 4 5 7 2.5z" fill="#444"/><path d="M4.5 7.5L1 11M1.5 1.5L10.5 11.5" stroke="#444" stroke-width="1.1"/></svg>
<svg class="a" style="left:1117px;top:315px" width="11" height="11" viewBox="0 0 12 12"><path d="M1 1L11 11M11 1L1 11" stroke="#555" stroke-width="1.3"/></svg>
<!-- toolbar row1 -->
<svg class="a" style="left:821px;top:348px" width="14" height="16" viewBox="0 0 14 16"><path d="M1.5 1.5h7l4 4v9h-11z" fill="#dfe4fb" stroke="#5b6fd6" stroke-width="1.1"/><path d="M8.5 1.5v4h4" fill="none" stroke="#5b6fd6" stroke-width="1"/><path d="M3 11c1.5-2.5 5.5-2.5 7 0c-1.5 2.5-5.5 2.5-7 0z" fill="#fff" stroke="#333" stroke-width="1"/><circle cx="6.5" cy="11" r="1.2" fill="#333"/></svg>
<svg class="a" style="left:847px;top:348px" width="15" height="15" viewBox="0 0 15 15"><rect x="1" y="1" width="9" height="8" fill="none" stroke="#bbb" stroke-width="1" stroke-dasharray="1.5 1"/><circle cx="8" cy="9" r="3.3" fill="#fff" stroke="#999" stroke-width="1.1"/><path d="M10.5 11.5l3 3" stroke="#999" stroke-width="1.2"/></svg>
<svg class="a" style="left:874px;top:348px" width="15" height="15" viewBox="0 0 15 15"><path d="M12.5 6A5.5 5.5 0 0 0 3 3.5M2.5 9A5.5 5.5 0 0 0 12 11.5" fill="none" stroke="#333" stroke-width="1.2"/><path d="M12.8 2.3v4h-4z M2.2 12.7v-4h4z" fill="#333"/></svg>
<svg class="a" style="left:901px;top:348px" width="16" height="16" viewBox="0 0 16 16"><rect x="4.5" y="1.5" width="10" height="10" rx="2" fill="#e3e8fb" stroke="#5b6fd6" stroke-width="1.1"/><rect x="1.5" y="4.5" width="10" height="10" rx="2" fill="#e3e8fb" stroke="#5b6fd6" stroke-width="1.1"/><path d="M4 9.5h5" stroke="#5b6fd6" stroke-width="1.2"/></svg>
<div class="a" style="left:926px;top:347px;width:1px;height:18px;background:#c5cccc"></div>
<svg class="a" style="left:938px;top:348px" width="16" height="16" viewBox="0 0 16 16"><rect x="3.5" y="1.5" width="7" height="11" rx="1.5" fill="#fff" stroke="#444" stroke-width="1"/><path d="M1 4h2.5M1 7h2.5M1 10h2.5" stroke="#444" stroke-width="1"/><circle cx="10" cy="10" r="3" fill="#fff" stroke="#5b6fd6" stroke-width="1.2"/><path d="M12 12l2.5 2.5" stroke="#5b6fd6" stroke-width="1.3"/></svg>
<!-- row2 -->
<svg class="a" style="left:819px;top:375px" width="17" height="17" viewBox="0 0 17 17"><path d="M8.5 1.5l2.1 4.4 4.8.6-3.5 3.3.9 4.8-4.3-2.3-4.3 2.3.9-4.8-3.5-3.3 4.8-.6z" fill="#f3e3c3" stroke="#b08a42" stroke-width="1.2" stroke-linejoin="round"/></svg>
<div class="a" style="left:845px;top:375px;width:1px;height:18px;background:#c5cccc"></div>
<svg class="a" style="left:858px;top:375px" width="15" height="17" viewBox="0 0 15 17"><rect x="4" y="1.5" width="7" height="14" rx="2" fill="#e3e8fb" stroke="#5b6fd6" stroke-width="1.1"/><path d="M1 4.5h3M1 8.5h3M1 12.5h3M11 4.5h3M11 8.5h3M11 12.5h3" stroke="#5b6fd6" stroke-width="1.1"/></svg>
<div class="t" style="left:880px;top:378px;font-size:12.5px;color:#444">Компоненты</div>
<div class="a" style="left:961px;top:375px;width:1px;height:18px;background:#c5cccc"></div>
<div class="a" style="left:969px;top:371px;width:65px;height:26px;background:#b9dedb;border-radius:5px"></div>
<svg class="a" style="left:976px;top:376px" width="15" height="16" viewBox="0 0 15 16"><circle cx="3.5" cy="3" r="2" fill="none" stroke="#5b6fd6" stroke-width="1.2"/><path d="M3.5 5v6.5a1.5 1.5 0 0 0 1.5 1.5H9" fill="none" stroke="#5b6fd6" stroke-width="1.2"/><circle cx="11.3" cy="13" r="2" fill="none" stroke="#5b6fd6" stroke-width="1.2"/></svg>
<div class="t" style="left:997px;top:378px;font-size:12.5px;color:#444">Цепи</div>
<svg class="a" style="left:1043px;top:376px" width="15" height="16" viewBox="0 0 15 16"><path d="M1 10l6.5 4 6.5-4-6.5-3z" fill="#c7f0c9" stroke="#2e9a3e" stroke-width="1"/><path d="M1 7l6.5 4 6.5-4-6.5-3z" fill="#d3dcf9" stroke="#5b6fd6" stroke-width="1"/><path d="M1 4l6.5 4 6.5-4-6.5-3z" fill="#f8caca" stroke="#d65b5b" stroke-width="1"/></svg>
<div class="t" style="left:1064px;top:378px;font-size:12.5px;color:#444">КП и ПО</div>
<div class="a" style="left:810px;top:400px;width:326px;height:1px;background:#d5dcdc"></div>
<!-- search -->
<div class="a" style="left:814px;top:406px;width:318px;height:27px;background:#eceeed;border:1px solid #dde2e2;border-radius:6px"></div>
<svg class="a" style="left:821px;top:413px" width="13" height="13" viewBox="0 0 13 13"><circle cx="5.5" cy="5.5" r="4" fill="none" stroke="#aaa" stroke-width="1"/><path d="M8.5 8.5l3.5 3.5" stroke="#aaa" stroke-width="1"/></svg>
<div class="t" style="left:849px;top:413px;font-size:12.5px;color:#555">Поиск</div>
<!-- tree -->
<svg class="a" style="left:819px;top:448px" width="12" height="8"><path d="M1.5 1.5l4.5 4.5 4.5-4.5" fill="none" stroke="#555" stroke-width="1.2"/></svg>
<svg class="a" style="left:838px;top:445px" width="16" height="15" viewBox="0 0 16 15"><path d="M1 2.5a1 1 0 0 1 1-1h4l1.5 1.5H14a1 1 0 0 1 1 1V13a1 1 0 0 1-1 1H2a1 1 0 0 1-1-1z" fill="#f3e3c3" stroke="#b08a42" stroke-width="1.1"/><path d="M1 5h14" stroke="#b08a42" stroke-width="1"/></svg>
<div class="t" style="left:864px;top:446px;font-size:12.5px;color:#333">Классы цепей</div>
<div class="a" style="left:1127px;top:459px;width:3px;height:12px;background:#c5cccc;border-radius:1px"></div>
<div class="a" style="left:814px;top:467px;width:318px;height:28px;background:#b3d8d6;border:1px solid #5fb0a8;border-radius:6px"></div>
<svg class="a" style="left:840px;top:477px" width="12" height="8"><path d="M1.5 1.5l4.5 4.5 4.5-4.5" fill="none" stroke="#444" stroke-width="1.2"/></svg>
<svg class="a" style="left:859px;top:473px" width="17" height="17" viewBox="0 0 17 17"><circle cx="8" cy="2.5" r="1.6" fill="none" stroke="#5b6fd6" stroke-width="1"/><circle cx="2.5" cy="8" r="1.6" fill="none" stroke="#5b6fd6" stroke-width="1"/><circle cx="14" cy="8.5" r="1.6" fill="none" stroke="#5b6fd6" stroke-width="1"/><circle cx="8" cy="14.5" r="1.6" fill="none" stroke="#5b6fd6" stroke-width="1"/><path d="M8 4v9M4 8h4M8 8.5h4.5" stroke="#5b6fd6" stroke-width="1"/></svg>
<div class="t" style="left:886px;top:475px;font-size:12.5px;color:#333">50Ohm</div>
<svg class="a" style="left:880px;top:502.0px" width="15" height="16" viewBox="0 0 15 16"><circle cx="3.5" cy="3" r="2" fill="none" stroke="#5b6fd6" stroke-width="1.2"/><path d="M3.5 5v6.5a1.5 1.5 0 0 0 1.5 1.5H9" fill="none" stroke="#5b6fd6" stroke-width="1.2"/><circle cx="11.3" cy="13" r="2" fill="none" stroke="#5b6fd6" stroke-width="1.2"/></svg>
<div class="t" style="left:907px;top:503.5px;font-size:12px;color:#333">CH0_ALE (2)</div>
<svg class="a" style="left:880px;top:530.7px" width="15" height="16" viewBox="0 0 15 16"><circle cx="3.5" cy="3" r="2" fill="none" stroke="#5b6fd6" stroke-width="1.2"/><path d="M3.5 5v6.5a1.5 1.5 0 0 0 1.5 1.5H9" fill="none" stroke="#5b6fd6" stroke-width="1.2"/><circle cx="11.3" cy="13" r="2" fill="none" stroke="#5b6fd6" stroke-width="1.2"/></svg>
<div class="t" style="left:907px;top:532.2px;font-size:12px;color:#333">CH0_CLE (2)</div>
<svg class="a" style="left:880px;top:559.3px" width="15" height="16" viewBox="0 0 15 16"><circle cx="3.5" cy="3" r="2" fill="none" stroke="#5b6fd6" stroke-width="1.2"/><path d="M3.5 5v6.5a1.5 1.5 0 0 0 1.5 1.5H9" fill="none" stroke="#5b6fd6" stroke-width="1.2"/><circle cx="11.3" cy="13" r="2" fill="none" stroke="#5b6fd6" stroke-width="1.2"/></svg>
<div class="t" style="left:907px;top:560.8px;font-size:12px;color:#333">CH0_DQ_0 (2)</div>
<div class="a" style="left:807px;top:522px;width:333px;height:3px;background:#7bb59c"></div>
<div class="a" style="left:810px;top:587px;width:325px;height:11px;background:#eceeee"></div>
<svg class="a" style="left:967px;top:588px" width="12" height="8"><path d="M1.5 6l4.5-4.5 4.5 4.5" fill="none" stroke="#444" stroke-width="1.2"/></svg>
<div class="a" style="left:806px;top:602px;width:334px;height:2px;background:#d5dcdc"></div>
<!-- properties -->
<svg class="a" style="left:809px;top:613px" width="16" height="16" viewBox="0 0 16 16"><path d="M1 3h14M1 8h14M1 13h14" stroke="#888" stroke-width="1.1"/><circle cx="5" cy="3" r="2" fill="#fff" stroke="#5b6fd6" stroke-width="1.2"/><circle cx="10" cy="8" r="2" fill="#fff" stroke="#5b6fd6" stroke-width="1.2"/><circle cx="5" cy="13" r="2" fill="#fff" stroke="#5b6fd6" stroke-width="1.2"/></svg>
<div class="t" style="left:831px;top:615px;font-size:12.5px;color:#444">Свойства</div>
<svg class="a" style="left:1117px;top:614px" width="12" height="13" viewBox="0 0 12 13"><path d="M7.5 1L11 4.5 9.5 5 7 8 7.5 10 2 4.5 4 5 7 2.5z" fill="#444"/><path d="M4.5 7.5L1 11M1.5 1.5L10.5 11.5" stroke="#444" stroke-width="1.1"/></svg>
<div class="t" style="left:914px;top:646.5px;font-size:12.3px;color:#222;font-weight:bold">Инструмент ( Трек )</div>
<svg class="a" style="left:819px;top:674px" width="14" height="14" viewBox="0 0 14 14"><circle cx="6" cy="6" r="4.5" fill="none" stroke="#aaa" stroke-width="1"/><path d="M9.3 9.3l3.7 3.7" stroke="#aaa" stroke-width="1"/></svg>
<div class="t" style="left:840px;top:675px;font-size:12.5px;color:#555">Поиск</div>
<div class="a" style="left:809px;top:698px;width:327px;height:1px;background:#d5dcdc"></div>
<div class="a" style="left:1031px;top:705px;width:1px;height:239px;background:#e3e6f3"></div>
<div class="a" style="left:1035px;top:887px;width:97px;height:27px;background:#eceeed;border-radius:5px"></div>
<div class="a" style="left:1132px;top:845px;width:3px;height:88px;background:#c5cccc;border-radius:1px"></div>
<div class="a" style="left:807px;top:760px;width:333px;height:3px;background:#7bb59c"></div>
<div class="t" style="left:840px;top:712.9px;font-size:12px;color:#555">Имя цепи</div><div class="t" style="left:1043px;top:712.9px;font-size:12px;color:#333">CH0_ALE</div>
<div class="t" style="left:840px;top:743.2px;font-size:12px;color:#555">Ширина трека</div><div class="t" style="left:1043px;top:743.2px;font-size:12px;color:#333">0,2228</div>
<div class="t" style="left:840px;top:773.5px;font-size:12px;color:#555">Длина трека</div><div class="t" style="left:1043px;top:773.5px;font-size:12px;color:#333">4,233</div>
<div class="t" style="left:840px;top:803.8px;font-size:12px;color:#555">Полная длина трека</div><div class="t" style="left:1043px;top:803.8px;font-size:12px;color:#333">4,233</div>
<div class="t" style="left:840px;top:834.1px;font-size:12px;color:#555">Общая длина зауженных учас...</div><div class="t" style="left:1043px;top:834.1px;font-size:12px;color:#333">0</div>
<div class="t" style="left:840px;top:864.4px;font-size:12px;color:#555">Длина зауженного участка</div><div class="t" style="left:1043px;top:864.4px;font-size:12px;color:#333">0</div>
<div class="t" style="left:840px;top:894.7px;font-size:12px;color:#555">Ширина</div><div class="t" style="left:1043px;top:894.7px;font-size:12px;color:#333">0,2228</div>
<div class="t" style="left:840px;top:925.0px;font-size:12px;color:#555">Ширина (мин;макс)</div><div class="t" style="left:1043px;top:925.0px;font-size:12px;color:#333">0,2228;0,2228</div>
</body></html>
